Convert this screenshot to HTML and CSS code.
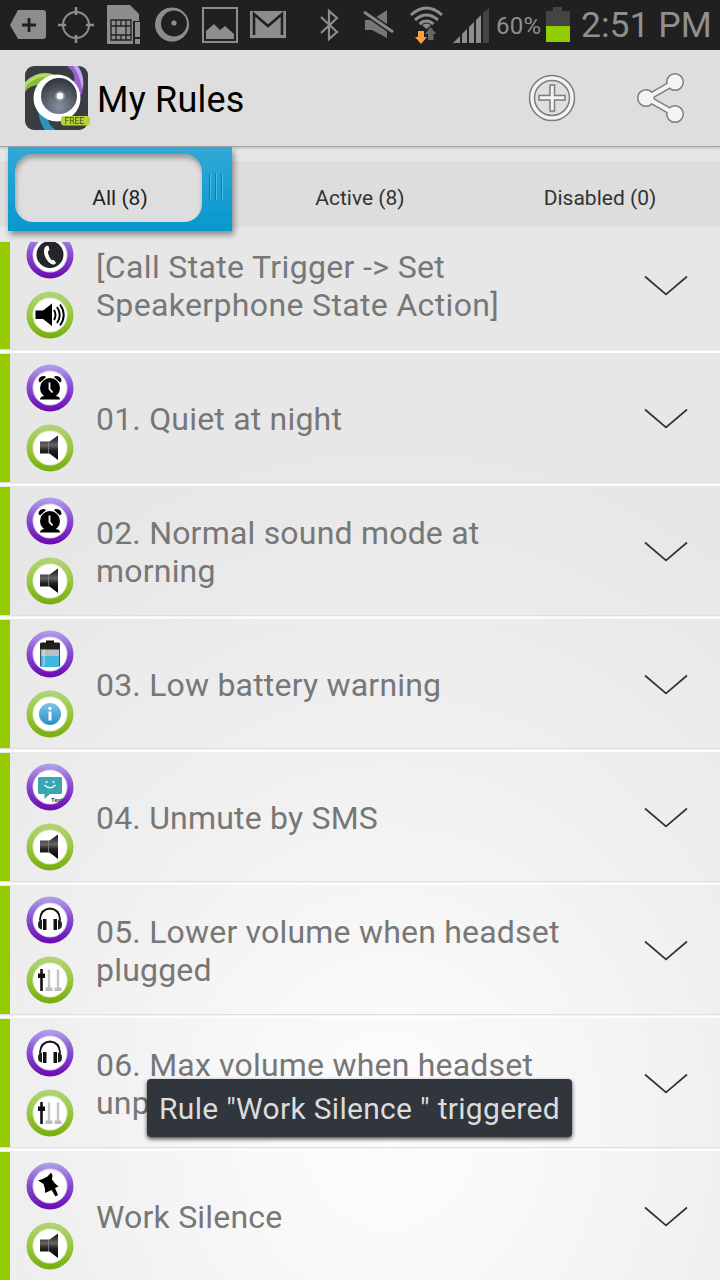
FILE: index.html
```html
<!DOCTYPE html>
<html lang="en">
<head>
    <meta charset="UTF-8">
    <meta name="viewport" content="width=device-width, initial-scale=1.0">
    <title>My Rules</title>
    <link rel="stylesheet" href="styles.css">
</head>
<body>
    <!-- shared icons -->
    <svg class="defs" width="0" height="0">
        <defs>
            <linearGradient id="purple" x1="0" y1="0" x2="0" y2="1">
                <stop offset="0" stop-color="#b3a3ea"/>
                <stop offset=".45" stop-color="#8850d0"/>
                <stop offset="1" stop-color="#6b08b0"/>
            </linearGradient>
            <linearGradient id="green" x1="0" y1="0" x2="0" y2="1">
                <stop offset="0" stop-color="#b4d47c"/>
                <stop offset=".45" stop-color="#9bc943"/>
                <stop offset="1" stop-color="#76ad0c"/>
            </linearGradient>
            <linearGradient id="metal" x1="0" y1="0" x2="0" y2="1">
                <stop offset="0" stop-color="#111"/>
                <stop offset=".4" stop-color="#666"/>
                <stop offset=".6" stop-color="#222"/>
                <stop offset="1" stop-color="#000"/>
            </linearGradient>
            <linearGradient id="sky" x1="0" y1="0" x2="0" y2="1">
                <stop offset="0" stop-color="#7fc4e2"/>
                <stop offset="1" stop-color="#2791c9"/>
            </linearGradient>
            <radialGradient id="lens" cx=".5" cy=".8" r=".75">
                <stop offset="0" stop-color="#8790a4"/>
                <stop offset="1" stop-color="#33383d"/>
            </radialGradient>
        </defs>
        <symbol id="ring-purple" viewBox="0 0 48 48">
            <circle cx="24" cy="24" r="23.500" fill="url(#purple)"/>
            <circle cx="24" cy="24" r="17.500" fill="#d9c8f0"/>
            <circle cx="24" cy="24" r="16.600" fill="#fff"/>
        </symbol>
        <symbol id="ring-green" viewBox="0 0 48 48">
            <circle cx="24" cy="24" r="23.500" fill="url(#green)"/>
            <circle cx="24" cy="24" r="17.500" fill="#dcecc0"/>
            <circle cx="24" cy="24" r="16.600" fill="#fff"/>
        </symbol>
        <symbol id="phone" viewBox="0 0 48 48">
            <use href="#ring-purple"/>
            <circle cx="24" cy="23.500" r="13.500" fill="#222529"/>
            <path d="M19 16q2-2 3.500-1l1 4q-2 1-1.500 3 1 4 3 6.500 1 1 3 .5l2 3q-1 2-3.500 1.500-5-2-7.500-8-2-6 0-9.500z" fill="#fff"/>
        </symbol>
        <symbol id="loud" viewBox="0 0 48 48">
            <use href="#ring-green"/>
            <path d="M9.500 19.500h7.500l9-7v22.500l-9-7H9.500z" fill="#000"/>
            <path d="M28 19q3 5 0 10M31 16q5.500 8 0 16M34 13.500q7.500 10.500 0 21" fill="none" stroke="#000" stroke-width="1.900"/>
        </symbol>
        <symbol id="alarm" viewBox="0 0 48 48">
            <use href="#ring-purple"/>
            <path d="M12.500 17q0-5 6-5l1.500 1-6 5.500zM35.500 17q0-5-6-5l-1.500 1 6 5.500z"/>
            <circle cx="24" cy="24" r="10"/>
            <path d="M14 35.500q0-3 4-3.500h12q4 .5 4 3.500z"/>
            <path d="M23.500 18.500v6.500l3 3.500" fill="none" stroke="#fff" stroke-width="1.800"/>
        </symbol>
        <symbol id="speaker" viewBox="0 0 48 48">
            <use href="#ring-green"/>
            <path d="M14 17.500h9.500l8.500-6v24.500l-8.500-6.500H14z" fill="url(#metal)"/>
            <path d="M22.500 18v11.500" stroke="#888" stroke-width=".8"/>
        </symbol>
        <symbol id="battery" viewBox="0 0 48 48">
            <use href="#ring-purple"/>
            <path d="M20 10.500h8v3h-8z" fill="#111"/>
            <rect x="14" y="12.500" width="20" height="8" rx="1.500" fill="#202020"/>
            <path d="M14 19.500h20v7H14z" fill="#b9c0c2"/>
            <path d="M14 26h20v9.500q0 1.500-1.500 1.500h-17q-1.500 0-1.500-1.500z" fill="#42b7de"/>
            <path d="M14.500 19v17M33.500 19v17" stroke="#42555c" stroke-width="1"/>
            <path d="M18 19v17" stroke="#fff" stroke-width="2" opacity=".3"/>
        </symbol>
        <symbol id="info" viewBox="0 0 48 48">
            <use href="#ring-green"/>
            <circle cx="24" cy="24" r="11" fill="url(#sky)"/>
            <circle cx="24" cy="18.500" r="1.700" fill="#fff"/>
            <path d="M24 21.500v9" stroke="#fff" stroke-width="3"/>
        </symbol>
        <symbol id="sms" viewBox="0 0 48 48">
            <use href="#ring-purple"/>
            <path d="M13.500 14h21q1.500 0 1.500 1.500v14q0 1.500-1.500 1.500H24l-5.500 5v-5h-5q-1.500 0-1.500-1.500v-14q0-1.500 1.500-1.500z" fill="#38a7b0"/>
            <path d="M18.500 22q5.500 5.500 11 0" fill="none" stroke="#fff" stroke-width="1.300"/>
            <path d="M19.500 19h2M26.500 19h2" stroke="#fff" stroke-width="1.500"/>
            <text x="25" y="38.500" class="sms-text">Text</text>
        </symbol>
        <symbol id="headset" viewBox="0 0 48 48">
            <use href="#ring-purple"/>
            <path d="M14 24.500v-1.500q1-10 10-10.500 9 .5 10 10.500v1.500" fill="none" stroke="#111" stroke-width="1.800"/>
            <path d="M16 23.500v10q-4-.5-4-5t4-5zM32 23.500v10q4-.5 4-5t-4-5z" fill="#222"/>
            <path d="M17 23h3.500v11H17zM27.500 23H31v11h-3.500z" fill="#111"/>
        </symbol>
        <symbol id="sliders" viewBox="0 0 48 48">
            <use href="#ring-green"/>
            <path d="M23 13.500v19M32 13.500v19" stroke="#c4c4c4" stroke-width="2.400"/>
            <path d="M19.500 31.500h7v3.500h-7zM28.500 31.500h7v3.500h-7z" fill="#bdbdbd"/>
            <path d="M15.500 13v22" stroke="#111" stroke-width="2.600"/>
            <path d="M12 17.500h7v4.500h-7z" fill="#111"/>
        </symbol>
        <symbol id="pin" viewBox="0 0 48 48">
            <use href="#ring-purple"/>
            <path d="M12 18.500l4.500-1.500 5-2.500 3.500-4 1.500 3-.5 4 3 4 3.500 3-3.500 1.500 3 7-2.500 1.500-4-6.500-6.500 3v-4l-1.500-5z"/>
        </symbol>
        <symbol id="chevron" viewBox="0 0 44 22">
            <path d="M1 1.500L22 19.500 43 1.500" fill="none" stroke="#333" stroke-width="1.700"/>
        </symbol>
    </svg>

    <div class="status-bar">
        <svg class="status-icons" viewBox="0 0 295 50" width="295" height="50" fill="#8d8d8d">
            <path d="M18 10h25q3 0 3 3v23q0 3-3 3H18L10 25z"/>
            <path d="M29 18v14M22 25h14" stroke="#202020" stroke-width="2.800"/>
            <circle cx="76" cy="25" r="13" fill="none" stroke="#8d8d8d" stroke-width="2"/>
            <path d="M76 7v8M76 35v8M58 25h8M86 25h8" stroke="#8d8d8d" stroke-width="2.600"/>
            <path d="M107 5h23l9 9v7h-6v23h-26z"/>
            <path d="M111 20h20v20h-20zM116 26h10v9h-10zM116 20v6M121 20v6M126 20v6M116 35v5M121 35v5M126 35v5M111 26h5M111 35h5M126 26h5M126 35h5" fill="none" stroke="#202020" stroke-width="1.300"/>
            <path d="M135 22h5v15h-5zM135 39h5v5h-5z"/>
            <path fill-rule="evenodd" d="M172 7.500a17 17 0 1 0 .1 0zM174 10.500a13 13 0 1 1-.1 0z"/>
            <circle cx="174" cy="23" r="2.600"/>
            <path d="M203 8h34v34h-34z" fill="none" stroke="#8d8d8d" stroke-width="2"/>
            <path d="M206 39v-8l8-7 6 6 5-4 9 8v5z"/>
            <path d="M250 11h36v27h-36z"/>
            <path d="M254 35V14l14 12 14-12v21" fill="none" stroke="#202020" stroke-width="2.600"/>
        </svg>
        <svg class="status-icons" viewBox="318 0 172 50" width="172" height="50" fill="#8d8d8d">
            <path d="M321 17l16 15-8 7V11l8 7-16 15" fill="none" stroke="#8d8d8d" stroke-width="2.200"/>
            <path d="M365 20h7l15-10v28l-15-8h-7z" fill="#777"/>
            <path d="M364 12l29 20" stroke="#202020" stroke-width="6"/>
            <path d="M364 12l29 20" stroke="#888" stroke-width="3"/>
            <path d="M411 15q15.500-14 31 0M415 20q11.500-10 23 0M419.500 24q7-6 14 0" fill="none" stroke="#8d8d8d" stroke-width="3"/>
            <path d="M422 25q5-3 9 0l-4.500 4z"/>
            <path d="M418 31h6v6h3l-6 7-6-7h3z" fill="#f9a13a"/>
            <path d="M428 40v-6h-3l5.500-7 6 7h-3v6z" fill="#666"/>
            <path d="M453 43l7-7v7zM462 34l5-5v14h-5zM469 27l5-5v21h-5zM476 20l5-5v28h-5z"/>
            <path d="M483 13l6-5v35h-6z" fill="#444"/>
        </svg>
        <span class="battery-level">60%</span>
        <svg class="battery-icon" viewBox="0 0 24 36" width="24" height="36">
            <path d="M0 4h7V0h9v4h8v15H0z" fill="#444"/>
            <path d="M0 19h24v16H0z" fill="#8fce00"/>
        </svg>
        <span class="clock">2:51 PM</span>
    </div>

    <div class="header">
        <svg class="logo" viewBox="0 0 66 64" width="66" height="64">
            <clipPath id="logoClip"><rect width="63" height="64" rx="9"/></clipPath>
            <g clip-path="url(#logoClip)">
                <rect width="64" height="64" fill="#383d42"/>
                <path d="M0 18Q14 4 34 10L18 20Q6 17 0 26z" fill="#88bd35"/>
                <path d="M0 16Q14 3 30 9L18 11Q6 13 0 22z" fill="#b1dc68"/>
                <path d="M42 0h11Q62 14 56 30L49 16Q51 7 42 0z" fill="#9a61cb"/>
                <path d="M48 0h5Q61 13 57 23Q55 9 48 0z" fill="#c9a2ef"/>
                <path d="M13 45Q15 58 20 64h11Q22 59 23 49z" fill="#2c94b8"/>
                <circle cx="32" cy="32" r="23.500" fill="#fff"/>
                <circle cx="34" cy="30" r="18" fill="url(#lens)"/>
                <circle cx="35" cy="30" r="5" fill="#aab0b8" opacity=".6"/>
                <circle cx="35" cy="30" r="3.300" fill="#fff"/>
            </g>
            <rect x="36" y="50" width="29" height="9.500" rx="3" fill="#b7d43b"/>
            <text x="39.500" y="58" class="free">FREE</text>
        </svg>
        <h1>My Rules</h1>
        <svg class="add" viewBox="0 0 48 48" width="48" height="48" fill="#f4f4f4" stroke="#7c7c7c" stroke-width="1.500">
            <circle cx="24" cy="24" r="22.500"/>
            <circle cx="24" cy="24" r="17.500" fill="#dedede"/>
            <path d="M22 11h4.500v10.500H37v4.500H26.500V37H22V26H11v-4.500h11z"/>
        </svg>
        <svg class="share" viewBox="0 0 50 52" width="50" height="52">
            <path d="M11 26L39 10M11 26L39 42" stroke="#7c7c7c" stroke-width="7"/>
            <g fill="#f4f4f4" stroke="#7c7c7c" stroke-width="1.500">
                <circle cx="10" cy="26" r="8.300"/>
                <circle cx="39" cy="10" r="8.300"/>
                <circle cx="39" cy="42" r="8.300"/>
            </g>
            <path d="M11 26L39 10M11 26L39 42" stroke="#f4f4f4" stroke-width="4.200"/>
        </svg>
    </div>

    <div class="tabs">
        <div class="selector"><div class="window"></div><div class="grip"></div></div>
        <div class="tab active">All (8)</div>
        <div class="tab">Active (8)</div>
        <div class="tab">Disabled (0)</div>
    </div>

    <div class="list">
        <div class="rule first">
            <div class="icons"><svg><use href="#phone"/></svg><svg><use href="#loud"/></svg></div>
            <p>[Call State Trigger -&gt; Set Speakerphone State Action]</p>
            <svg class="chevron"><use href="#chevron"/></svg>
        </div>
        <div class="rule">
            <div class="icons"><svg><use href="#alarm"/></svg><svg><use href="#speaker"/></svg></div>
            <p>01. Quiet at night</p>
            <svg class="chevron"><use href="#chevron"/></svg>
        </div>
        <div class="rule">
            <div class="icons"><svg><use href="#alarm"/></svg><svg><use href="#speaker"/></svg></div>
            <p>02. Normal sound mode at morning</p>
            <svg class="chevron"><use href="#chevron"/></svg>
        </div>
        <div class="rule">
            <div class="icons"><svg><use href="#battery"/></svg><svg><use href="#info"/></svg></div>
            <p>03. Low battery warning</p>
            <svg class="chevron"><use href="#chevron"/></svg>
        </div>
        <div class="rule">
            <div class="icons"><svg><use href="#sms"/></svg><svg><use href="#speaker"/></svg></div>
            <p>04. Unmute by SMS</p>
            <svg class="chevron"><use href="#chevron"/></svg>
        </div>
        <div class="rule">
            <div class="icons"><svg><use href="#headset"/></svg><svg><use href="#sliders"/></svg></div>
            <p>05. Lower volume when headset plugged</p>
            <svg class="chevron"><use href="#chevron"/></svg>
        </div>
        <div class="rule">
            <div class="icons"><svg><use href="#headset"/></svg><svg><use href="#sliders"/></svg></div>
            <p>06. Max volume when headset unplugged</p>
            <svg class="chevron"><use href="#chevron"/></svg>
        </div>
        <div class="rule">
            <div class="icons"><svg><use href="#pin"/></svg><svg><use href="#speaker"/></svg></div>
            <p>Work Silence</p>
            <svg class="chevron"><use href="#chevron"/></svg>
        </div>
    </div>

    <div class="toast">Rule "Work Silence " triggered</div>
</body>
</html>
```

FILE: styles.css
```css
* {
    box-sizing: border-box;
}

body {
    margin: 0;
    width: 720px;
    height: 1280px;
    position: relative;
    overflow: hidden;
    display: flex;
    flex-direction: column;
    font-family: Roboto, sans-serif;
    background: radial-gradient(ellipse 600px 680px at 390px 1130px, #fdfdfd 0%, #f8f8f8 25%, #efefef 60%, #e7e7e7 100%);
}

.defs {
    position: absolute;
}

.status-bar {
    height: 50px;
    flex: none;
    display: flex;
    align-items: center;
    background: #202020;
    color: #8f8f8f;
}

.status-icons + .status-icons {
    margin-left: 23px;
}

.battery-level {
    width: 56px;
    padding: 2px 0 0 6px;
    font-size: 24px;
    letter-spacing: 0.2px;
}

.battery-icon {
    margin-top: -1px;
}

.clock {
    margin-left: 11px;
    font-size: 35.5px;
    letter-spacing: 0;
    white-space: nowrap;
}

.header {
    height: 97px;
    flex: none;
    display: flex;
    align-items: center;
    padding: 0 34px 0 25px;
    background: #dedede;
    border-bottom: 1px solid #a3a5a4;
    box-shadow: 0 1px 3px rgba(0, 0, 0, 0.2);
}

h1 {
    flex: 1;
    margin: 4px 0 0 6px;
    font-size: 36px;
    font-weight: 400;
    letter-spacing: 0.2px;
    color: #000;
}

.add {
    margin-right: 60px;
}

.free {
    font: 8.5px Roboto, sans-serif;
    fill: #3b4a10;
}

.sms-text {
    font: bold 6px Roboto, sans-serif;
    fill: #234b58;
}

.tabs {
    position: relative;
    height: 66px;
    flex: none;
    margin-top: 14px;
    display: grid;
    grid-template-columns: repeat(3, 1fr);
    background: #dddddd;
}

.tab {
    position: relative;
    padding-top: 24px;
    text-align: center;
    font-size: 21px;
    line-height: 26px;
    color: #333;
}

.tab.active {
    color: #222;
}

.selector {
    position: absolute;
    left: 8px;
    top: -14px;
    width: 224px;
    height: 84px;
    display: flex;
    padding: 7px;
    background: linear-gradient(#31a9d8, #0797cd);
    box-shadow: 2px 4px 6px rgba(0, 0, 0, 0.4);
}

.window {
    width: 187px;
    height: 68px;
    border-radius: 18px;
    background: #dedede;
    box-shadow: inset 1px 4px 5px rgba(0, 0, 0, 0.3);
}

.grip {
    width: 14px;
    height: 27px;
    margin: 19px 0 0 7px;
    background: repeating-linear-gradient(90deg, #0b7fae 0 1px, #43bde8 1px 2px, transparent 2px 6px);
}

.list {
    flex: 1;
    margin-top: 15px;
    overflow: hidden;
}

.rule {
    height: 128px;
    margin-bottom: 5px;
    display: flex;
    align-items: center;
    border-left: 10px solid #96cb00;
    box-shadow: 0 1px 0 #dfdfdf, 0 2px 0 #f3f3f3, 0 4px 0 #fdfdfd;
}

.rule.first {
    margin-top: -21px;
}

.icons {
    width: 48px;
    margin-left: 16px;
    display: flex;
    flex-direction: column;
    gap: 12px;
}

.icons svg {
    width: 48px;
    height: 48px;
}

.rule p {
    width: 500px;
    margin: 2px 0 0 22px;
    font-size: 32px;
    line-height: 38px;
    letter-spacing: 0.2px;
    color: #777;
}

.rule.first p {
    letter-spacing: 0.35px;
}

.chevron {
    width: 44px;
    height: 22px;
    margin: 1px 32px 0 auto;
}

.toast {
    position: absolute;
    left: 147px;
    top: 1079px;
    width: 425px;
    height: 58px;
    border-radius: 4px;
    background: #30363c;
    color: #dcdcdc;
    font-size: 30px;
    line-height: 59px;
    letter-spacing: 0.3px;
    text-align: center;
    white-space: nowrap;
    box-shadow: 0 2px 4px rgba(0, 0, 0, 0.7);
}
```
